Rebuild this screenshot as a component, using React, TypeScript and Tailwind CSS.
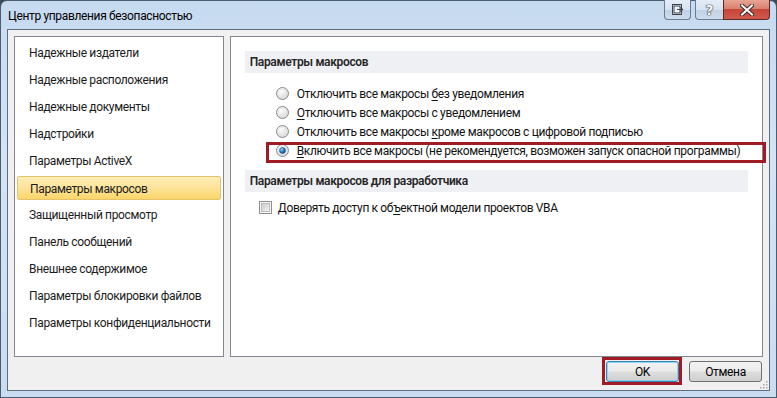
import React from "react";

const leftItems = [
  "Надежные издатели",
  "Надежные расположения",
  "Надежные документы",
  "Надстройки",
  "Параметры ActiveX",
  "Параметры макросов",
  "Защищенный просмотр",
  "Панель сообщений",
  "Внешнее содержимое",
  "Параметры блокировки файлов",
  "Параметры конфиденциальности",
];

function Radio({ checked }: { checked?: boolean }) {
  return (
    <svg width="13" height="13" viewBox="0 0 13 13" className="shrink-0">
      <defs>
        <radialGradient id={checked ? "rg1" : "rg0"} cx="0.35" cy="0.3" r="0.8">
          <stop offset="0" stopColor="#ffffff" />
          <stop offset="1" stopColor="#d4d4d4" />
        </radialGradient>
        <radialGradient id="dot" cx="0.35" cy="0.3" r="0.8">
          <stop offset="0" stopColor="#9fd4f7" />
          <stop offset="0.5" stopColor="#2b7fc9" />
          <stop offset="1" stopColor="#0b3f75" />
        </radialGradient>
      </defs>
      <circle cx="6.5" cy="6.5" r="6" fill={`url(#${checked ? "rg1" : "rg0"})`} stroke="#8a8a8a" strokeWidth="1" />
      <circle cx="6.5" cy="6.5" r="4.3" fill="none" stroke="#e2e2e2" strokeWidth="0.8" />
      {checked && <circle cx="6.5" cy="6.5" r="3" fill="url(#dot)" stroke="#1c4f85" strokeWidth="0.6" />}
    </svg>
  );
}

function Checkbox() {
  return (
    <svg width="13" height="13" viewBox="0 0 13 13" className="shrink-0">
      <defs>
        <linearGradient id="cbg" x1="0" y1="0" x2="1" y2="1">
          <stop offset="0" stopColor="#cbcbcb" />
          <stop offset="1" stopColor="#f4f4f4" />
        </linearGradient>
      </defs>
      <rect x="0.5" y="0.5" width="12" height="12" fill="#f6f6f6" stroke="#8e8f8f" />
      <rect x="2.5" y="2.5" width="8" height="8" fill="url(#cbg)" stroke="#bcbcbc" strokeWidth="1" />
    </svg>
  );
}

function WinButton({ children, def }: { children: React.ReactNode; def?: boolean }) {
  return (
    <div
      className={`relative w-[73px] h-[21px] rounded-[3px] border ${
        def ? "border-[#3c7fb1]" : "border-[#707070]"
      } bg-[linear-gradient(to_bottom,#f2f2f2_0%,#ebebeb_48%,#dddddd_52%,#cfcfcf_100%)] flex items-center justify-center text-[12px] text-black`}
    >
      {def && (
        <div className="absolute inset-0 rounded-[2px] border-[1.5px] border-[#6fd3f5] opacity-80 pointer-events-none" />
      )}
      <span className="relative">{children}</span>
    </div>
  );
}

export default function App() {
  return (
    <div className="w-[777px] h-[398px] bg-[#3d4a57] font-['Roboto',sans-serif] tracking-[-0.35px] overflow-hidden whitespace-nowrap">
      <div className="w-[777px] h-[398px] flex flex-col rounded-t-[7px] border border-[#4b5d70] bg-[linear-gradient(to_bottom,#c6daf0_0%,#d4e4f5_40%,#cadcf0_100%)]">
        {/* Title bar */}
        <div className="h-[28px] flex items-start justify-between shrink-0">
          <div className="pl-[7px] pt-[6px] text-[12px] leading-[18px] text-black">
            Центр управления безопасностью
          </div>
          <div className="flex items-start -mt-[1px] mr-[6px]">
            <div className="w-[27px] h-[20px] rounded-b-[4px] border border-t-0 border-[#6b7c90] bg-[linear-gradient(to_bottom,#e4edf7_0%,#d7e3f1_50%,#bfd0e5_51%,#cfdcec_100%)] flex items-center justify-center">
              <svg width="12" height="11" viewBox="0 0 12 11">
                <rect x="0.5" y="0.5" width="9" height="10" fill="#f4f6f9" stroke="#3b4350" />
                <rect x="2" y="2" width="6" height="7" fill="none" stroke="#3b4350" />
                <path d="M5 5.5 H10.5 M8.5 3.5 L10.5 5.5 L8.5 7.5" stroke="#3b4350" strokeWidth="1.2" fill="none" />
              </svg>
            </div>
            <div className="w-[4px]" />
            <div className="w-[28px] h-[20px] rounded-bl-[4px] border border-t-0 border-r-0 border-[#6b7c90] bg-[linear-gradient(to_bottom,#e4edf7_0%,#d7e3f1_50%,#bfd0e5_51%,#cfdcec_100%)] flex items-center justify-center">
              <span className="text-[14px] leading-none font-bold text-[#f4f6f9] [text-shadow:0_0_1px_#333,0_0_1px_#333,0_0_1px_#333] font-['DejaVu_Sans',sans-serif]">?</span>
            </div>
            <div className="w-[47px] h-[20px] rounded-br-[4px] border border-t-0 border-[#5a2a24] bg-[linear-gradient(to_bottom,#e8a595_0%,#d9816f_45%,#c7463a_50%,#d0584a_100%)] flex items-center justify-center">
              <svg width="14" height="12" viewBox="0 0 14 12">
                <path d="M2 1.5 L12 10.5 M12 1.5 L2 10.5" stroke="#3b2a28" strokeWidth="4" strokeLinecap="square" />
                <path d="M2 1.5 L12 10.5 M12 1.5 L2 10.5" stroke="#ffffff" strokeWidth="2" strokeLinecap="square" />
              </svg>
            </div>
          </div>
        </div>

        {/* Client area */}
        <div className="mx-[6px] h-[362px] border border-[#5d6e80] bg-[#f0f0f0] px-[6px] pt-[6px] flex flex-col relative">
          <div className="flex gap-[6px] h-[321px]">
            {/* Left panel */}
            <div className="w-[210px] h-full border border-[#828790] bg-white pt-[4px]">
              {leftItems.map((t, i) => (
                <div
                  key={t}
                  className={`mx-[2px] mb-[3px] h-[24px] pl-[12px] text-[12px] leading-[24px] text-[#1b1b1b] ${
                    i === 5
                      ? "rounded-[2px] border border-[#e3c46b] bg-[linear-gradient(to_bottom,#fdeeb7_0%,#fde39a_50%,#fcd66a_100%)] pl-[11px] leading-[22px]"
                      : ""
                  }`}
                >
                  {t}
                </div>
              ))}
            </div>

            {/* Right panel */}
            <div className="w-[534px] h-full border border-[#828790] bg-white relative">
              <div className="mt-[14px] mx-[14px] h-[22px] bg-[#eff0f3] pl-[5px] text-[12px] leading-[22px] font-semibold text-[#262626]">
                Параметры макросов
              </div>
              <div className="mt-[11px] pl-[45px] flex flex-col text-[12px] text-[#111]">
                <div className="h-[19px] flex items-center gap-[8px]">
                  <Radio />
                  <span>
                    Отключить все макросы <u className="underline-offset-2">б</u>ез уведомления
                  </span>
                </div>
                <div className="h-[19px] flex items-center gap-[8px]">
                  <Radio />
                  <span>
                    <u className="underline-offset-2">О</u>тключить все макросы с уведомлением
                  </span>
                </div>
                <div className="h-[19px] flex items-center gap-[8px]">
                  <Radio />
                  <span>
                    Отключить все макросы <u className="underline-offset-2">к</u>роме макросов с цифровой подписью
                  </span>
                </div>
                <div className="h-[19px] flex items-center gap-[8px]">
                  <Radio checked />
                  <span>
                    <u className="underline-offset-2">В</u>ключить все макросы (не рекомендуется, возможен запуск опасной программы)
                  </span>
                </div>
              </div>
              <div className="mt-[10px] mx-[14px] h-[22px] bg-[#eff0f3] pl-[5px] text-[12px] leading-[22px] font-semibold text-[#262626]">
                Параметры макросов для разработчика
              </div>
              <div className="mt-[6px] pl-[28px] h-[19px] flex items-center gap-[6px] text-[12px] text-[#111]">
                <Checkbox />
                <span>
                  Доверять доступ к об<u className="underline-offset-2">ъ</u>ектной модели проектов VBA
                </span>
              </div>

              {/* annotation box */}
              <div className="absolute left-[35px] top-[105px] w-[500px] h-[21px] border-[3px] border-[#a01b24] pointer-events-none" />
            </div>
          </div>

          {/* Buttons */}
          <div className="mt-[4px] flex justify-end gap-[10px] pr-[1px]">
            <div className="relative">
              <WinButton def>OK</WinButton>
              <div className="absolute -left-[4px] -top-[4px] -right-[3px] -bottom-[3px] border-[3px] border-[#a01b24] pointer-events-none" />
            </div>
            <WinButton>Отмена</WinButton>
          </div>

          {/* resize grip */}
          <svg width="10" height="10" viewBox="0 0 10 10" className="absolute right-[1px] bottom-[1px]">
            {[
              [8, 2],
              [5, 5],
              [8, 5],
              [2, 8],
              [5, 8],
              [8, 8],
            ].map(([x, y]) => (
              <rect key={`${x}-${y}`} x={x} y={y} width="1.5" height="1.5" fill="#a8a8a8" />
            ))}
          </svg>
        </div>
      </div>
    </div>
  );
}
